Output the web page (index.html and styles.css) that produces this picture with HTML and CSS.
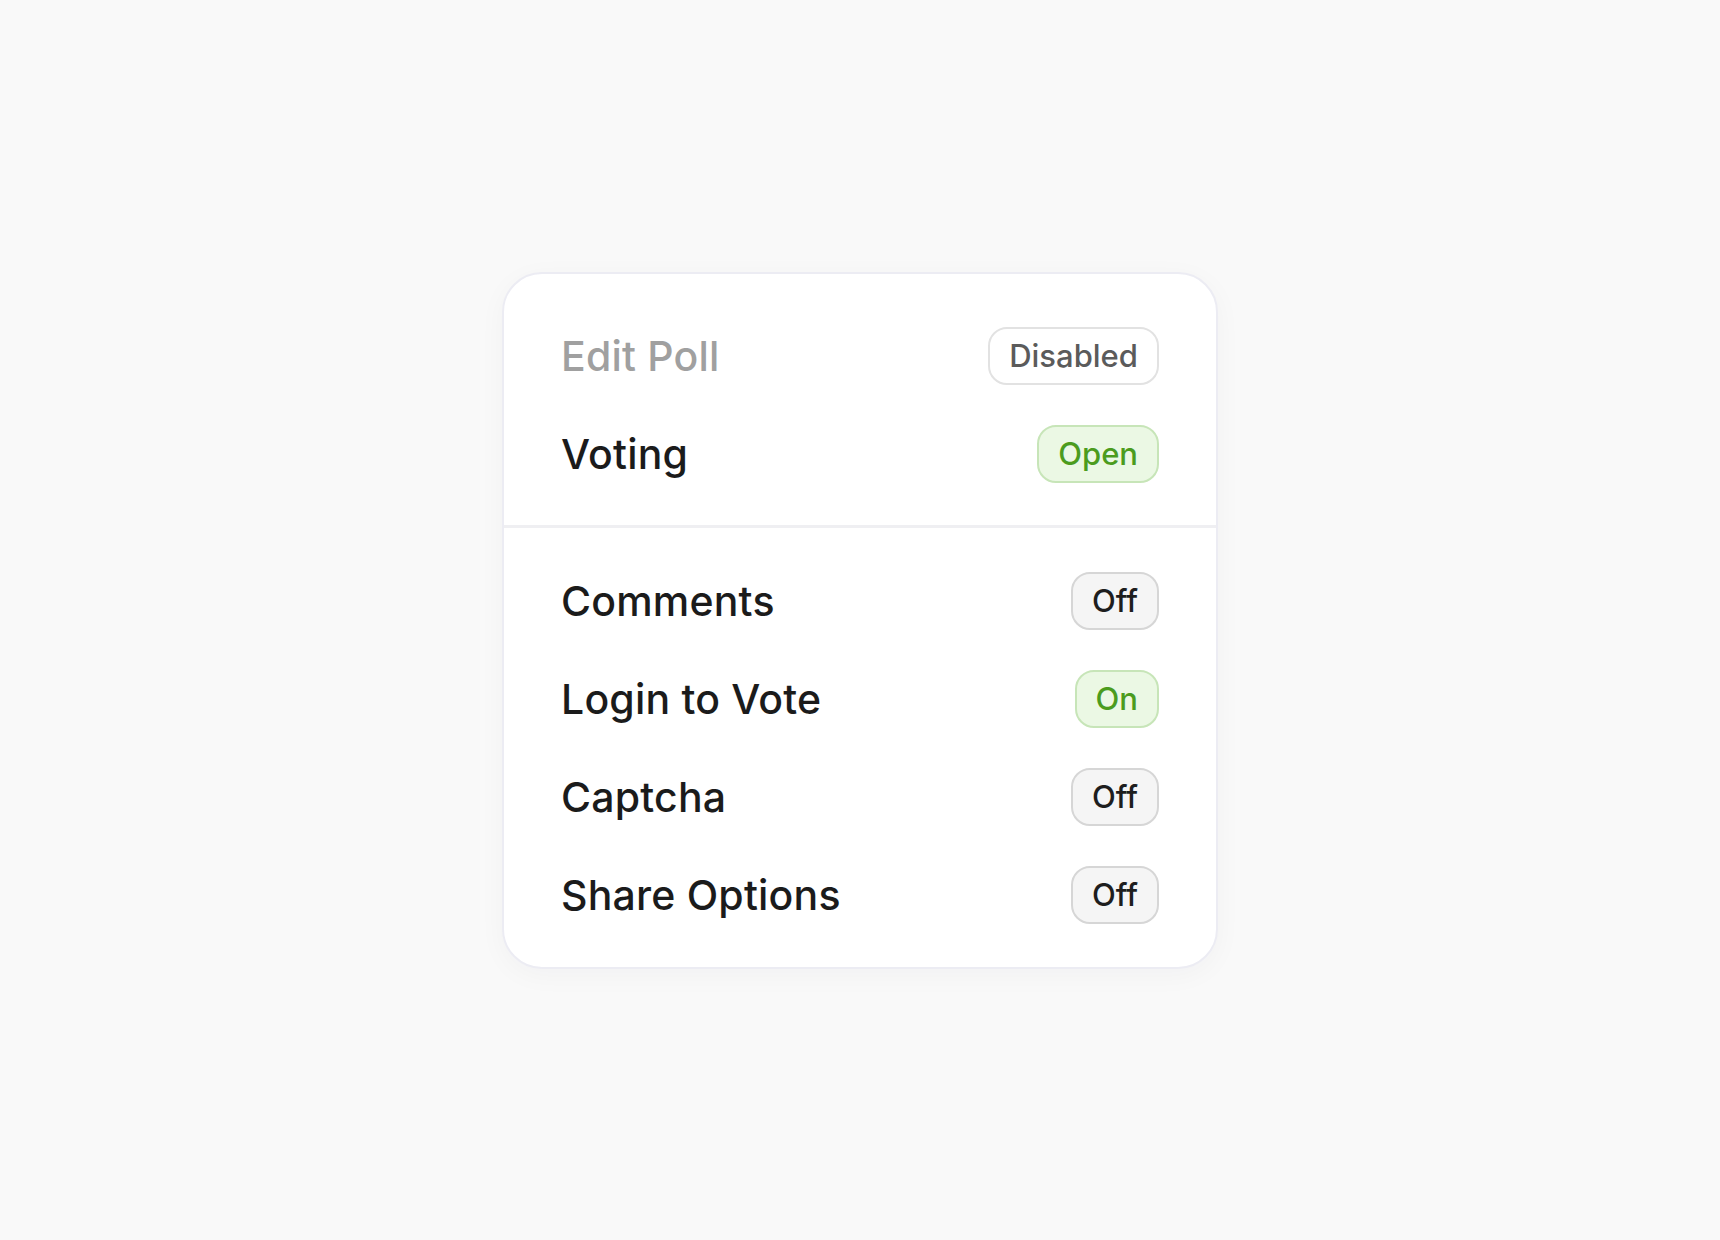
FILE: index.html
```html
<!DOCTYPE html>
<html lang="en">
<head>
<meta charset="utf-8">
<title>Poll Settings</title>
<link rel="stylesheet" href="styles.css">
</head>
<body>
<main class="stage">
  <section class="card">
    <div class="group group-top">
      <div class="row">
        <span class="label label-muted">Edit Poll</span>
        <span class="pill pill-disabled">Disabled</span>
      </div>
      <div class="row">
        <span class="label">Voting</span>
        <span class="pill pill-on">Open</span>
      </div>
    </div>
    <div class="divider"></div>
    <div class="group group-bottom">
      <div class="row">
        <span class="label">Comments</span>
        <span class="pill pill-off">Off</span>
      </div>
      <div class="row">
        <span class="label">Login to Vote</span>
        <span class="pill pill-on">On</span>
      </div>
      <div class="row">
        <span class="label">Captcha</span>
        <span class="pill pill-off">Off</span>
      </div>
      <div class="row">
        <span class="label">Share Options</span>
        <span class="pill pill-off">Off</span>
      </div>
    </div>
  </section>
</main>
</body>
</html>
```
FILE: styles.css
```css
* { box-sizing: border-box; }
html, body { margin: 0; padding: 0; }
body {
  background: #f9f9f9;
  font-family: Inter, "Noto Sans", "Liberation Sans", sans-serif;
  color: #1b1b1b;
}
.stage {
  width: 1720px;
  height: 1240px;
  display: flex;
  align-items: center;
  justify-content: center;
}
.card {
  width: 716px;
  background: #ffffff;
  border: 2px solid #ececf3;
  border-radius: 40px;
  box-shadow: 0 6px 28px rgba(30, 30, 60, 0.035);
  display: flex;
  flex-direction: column;
  overflow: hidden;
}
.group {
  display: flex;
  flex-direction: column;
  gap: 40px;
  padding-left: 57px;
  padding-right: 57px;
}
.group-top { padding-top: 53px; padding-bottom: 42px; }
.group-bottom { padding-top: 44px; padding-bottom: 43px; }
.divider {
  height: 3px;
  background: #efeff2;
}
.row {
  display: flex;
  align-items: center;
  justify-content: space-between;
  height: 58px;
}
.label {
  font-size: 41px;
  font-weight: 500;
  color: #1b1b1b;
  letter-spacing: 0.2px;
}
.label-muted { color: #a0a0a0; }
.pill {
  height: 58px;
  display: inline-flex;
  align-items: center;
  padding: 0 19px;
  border: 2px solid #d6d6d6;
  border-radius: 19px;
  font-size: 31px;
  font-weight: 500;
  line-height: 1;
}
.pill-disabled {
  background: #ffffff;
  border-color: #e2e2e2;
  color: #5b5b5b;
}
.pill-off {
  background: #f5f5f5;
  border-color: #d6d6d6;
  color: #1e1e1e;
}
.pill-on {
  background: #ebf8e4;
  border-color: #c7e5b8;
  color: #4b9c1e;
}
```
